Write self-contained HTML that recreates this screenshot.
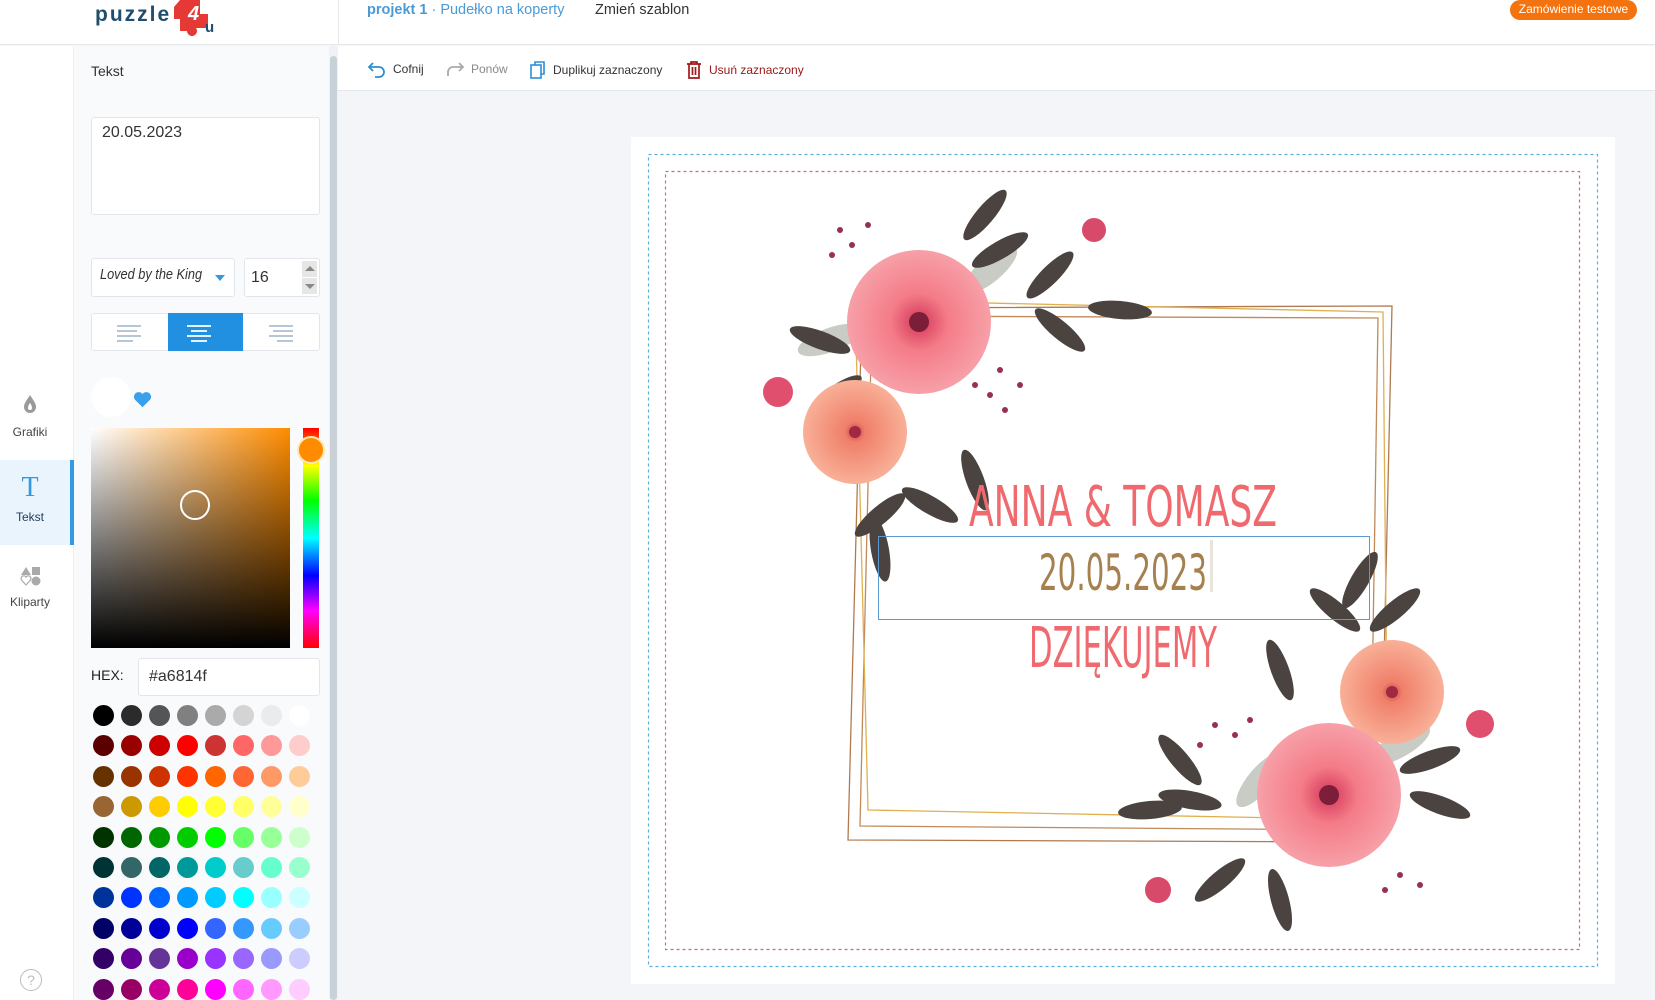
<!DOCTYPE html>
<html><head><meta charset="utf-8">
<style>
*{box-sizing:border-box;margin:0;padding:0}
body{width:1655px;height:1000px;overflow:hidden;background:#f4f5f8;font-family:"Liberation Sans",sans-serif;position:relative;color:#333}
.abs{position:absolute}
#header{left:0;top:0;width:1655px;height:45px;background:#fff;border-bottom:1px solid #e6e8ec}
#rail{left:0;top:46px;width:74px;height:954px;background:#fff;border-right:1px solid #eceef2}
#panel{left:74px;top:46px;width:255px;height:954px;background:#f9fafc}
#scroll{left:329px;top:46px;width:9px;height:954px;background:#f0f2f5}
#thumb{left:330px;top:56px;width:7px;height:944px;background:#c8d0d8;border-radius:4px}
#toolbar{left:338px;top:46px;width:1317px;height:45px;background:#fff;border-bottom:1px solid #e3e6ea}
.tb{top:60px;font-size:12px;color:#333;display:flex;align-items:center;gap:6px}
.box{background:#fff;border:1px solid #e2e5ea;border-radius:3px}
.sw{width:21px;height:21px;border-radius:50%}
#grid{left:93px;top:705px;display:grid;grid-template-columns:repeat(8,21px);column-gap:7px;row-gap:9.4px}
.lab{font-size:12px;color:#444;text-align:center;width:60px}
</style></head><body>
<div id="header" class="abs"></div>
<div class="abs" style="left:338px;top:0;width:1px;height:45px;background:#e6e8ec"></div>
<!-- logo -->
<svg class="abs" style="left:92px;top:0" width="140" height="44" viewBox="0 0 140 44">
<path d="M88 0 h20 v14 h8 v14 h-12 a5 5 0 1 1 -9 3 h-7 v-12 h-6 v-12 z" fill="#e53935"/>
<text x="3" y="21" font-family="Liberation Sans" font-weight="bold" font-size="21" fill="#1f4e6e" letter-spacing="2">puzzle</text>
<text x="96" y="20" font-family="Liberation Sans" font-weight="bold" font-style="italic" font-size="20" fill="#fff">4</text>
<text x="113" y="32" font-family="Liberation Sans" font-weight="bold" font-size="15" fill="#1f4e6e">u</text>
</svg>
<div class="abs" style="left:367px;top:2px;font-size:14.5px;color:#4a9ad6"><b>projekt 1</b> · Pudełko na koperty</div>
<div class="abs" style="left:595px;top:2px;font-size:14.5px;color:#333">Zmień szablon</div>
<div class="abs" style="left:1510px;top:0;width:127px;height:20px;background:#f5730f;border-radius:10px;color:#fff;font-size:12px;text-align:center;line-height:19px">Zamówienie testowe</div>

<div id="toolbar" class="abs"></div>
<div class="abs tb" style="left:367px"><svg width="20" height="18" viewBox="0 0 20 18"><path d="M6 3 L2 7 L6 11 M2 7 H12 a5 5 0 0 1 0 10 H8" fill="none" stroke="#2c8fd6" stroke-width="1.8"/></svg>Cofnij</div>
<div class="abs tb" style="left:445px;color:#888"><svg width="20" height="18" viewBox="0 0 20 18"><path d="M14 3 L18 7 L14 11 M18 7 H8 a5 5 0 0 0 -5 5 V16" fill="none" stroke="#aaa" stroke-width="1.8"/></svg>Ponów</div>
<div class="abs tb" style="left:529px"><svg width="18" height="20" viewBox="0 0 18 20"><rect x="2" y="5" width="10" height="13" fill="none" stroke="#2c8fd6" stroke-width="1.6"/><path d="M6 5 V2 H15 V14 H12" fill="none" stroke="#2c8fd6" stroke-width="1.6"/></svg>Duplikuj zaznaczony</div>
<div class="abs tb" style="left:685px;color:#a01818"><svg width="18" height="20" viewBox="0 0 18 20"><path d="M2 4 H16 M6 4 V2 H12 V4 M4 4 V18 H14 V4 M7.5 7 V15 M10.5 7 V15" fill="none" stroke="#a01818" stroke-width="1.7"/></svg>Usuń zaznaczony</div>

<div id="rail" class="abs"></div>
<svg class="abs" style="left:22px;top:394px" width="16" height="20" viewBox="0 0 16 20"><path d="M8 1 C5 6 2 9 2 13 a6 6 0 0 0 12 0 C14 9 11 6 8 1z" fill="#9a9a9a"/><path d="M8 9 C6.5 11 6 12.5 6 14 a2 2 0 0 0 4 0 c0-1.5 -0.5-3 -2-5z" fill="#fff"/></svg>
<div class="abs lab" style="left:0;top:425px">Grafiki</div>
<div class="abs" style="left:0;top:460px;width:74px;height:85px;background:#e9f4fd;border-right:4px solid #3399e0"></div>
<div class="abs" style="left:0;top:472px;width:60px;text-align:center;font-family:'Liberation Serif',serif;font-size:28px;color:#3399e0">T</div>
<div class="abs lab" style="left:0;top:510px;color:#1f3b57">Tekst</div>
<svg class="abs" style="left:20px;top:565px" width="22" height="22" viewBox="0 0 22 22"><path d="M6 2 L11 10 H1z" fill="#aaa"/><rect x="12" y="2" width="8" height="8" fill="#aaa"/><path d="M6 20 L1.5 15 a2.5 2.5 0 0 1 4.5-3 a2.5 2.5 0 0 1 4.5 3z" fill="none" stroke="#aaa" stroke-width="1.2"/><circle cx="16" cy="16" r="4.5" fill="#aaa"/></svg>
<div class="abs lab" style="left:0;top:595px">Kliparty</div>
<div class="abs" style="left:20px;top:969px;width:22px;height:22px;border:1px solid #bbb;border-radius:50%;color:#bbb;font-size:14px;text-align:center;line-height:20px">?</div>

<div id="panel" class="abs"></div>
<div id="scroll" class="abs"></div>
<div id="thumb" class="abs"></div>
<div class="abs" style="left:91px;top:63px;font-size:14px;color:#333">Tekst</div>
<div class="abs box" style="left:91px;top:117px;width:229px;height:98px;font-size:16px;padding:6px 10px;color:#333">20.05.2023</div>
<div class="abs box" style="left:91px;top:258px;width:144px;height:39px"></div>
<div class="abs" style="left:100px;top:266px;font-family:'Liberation Sans Narrow','Liberation Sans',sans-serif;font-size:15px;color:#333;font-style:italic;transform:scaleX(.85);transform-origin:left">Loved by the King</div>
<div class="abs" style="left:215px;top:275px;width:0;height:0;border-left:5px solid transparent;border-right:5px solid transparent;border-top:6px solid #3399e0"></div>
<div class="abs box" style="left:244px;top:258px;width:76px;height:39px;font-size:16px;padding:10px 6px">16</div>
<div class="abs" style="left:302px;top:261px;width:15px;height:16px;background:#e6e6e6"></div>
<div class="abs" style="left:302px;top:278px;width:15px;height:16px;background:#e6e6e6"></div>
<div class="abs" style="left:305px;top:266px;border-left:5px solid transparent;border-right:5px solid transparent;border-bottom:5px solid #888"></div>
<div class="abs" style="left:305px;top:284px;border-left:5px solid transparent;border-right:5px solid transparent;border-top:5px solid #888"></div>
<div class="abs box" style="left:91px;top:313px;width:229px;height:38px"></div>
<div class="abs" style="left:168px;top:313px;width:75px;height:38px;background:#2290e0"></div>
<svg class="abs" style="left:91px;top:313px" width="229" height="38">
<g stroke="#9fb2c6" stroke-width="1.6"><path d="M26 13 H50 M26 18 H46 M26 23 H50 M26 28 H42"/><path d="M178 13 H202 M182 18 H202 M178 23 H202 M186 28 H202"/></g>
<g stroke="#fff" stroke-width="1.8"><path d="M96 13 H120 M100 18 H116 M96 23 H120 M100 28 H116"/></g>
</svg>
<div class="abs" style="left:91px;top:377px;width:40px;height:40px;border-radius:50%;background:#fff"></div>
<svg class="abs" style="left:133px;top:391px" width="19" height="17" viewBox="0 0 24 22"><path d="M12 21 L2 11 A5.5 5.5 0 0 1 12 4 A5.5 5.5 0 0 1 22 11z" fill="#3ba0ea"/></svg>
<div class="abs" style="left:91px;top:428px;width:199px;height:220px;background:linear-gradient(to top,#000,rgba(0,0,0,0)),linear-gradient(to right,#fff,#ff8c00)"></div>
<div class="abs" style="left:180px;top:490px;width:30px;height:30px;border:2px solid #fff;border-radius:50%"></div>
<div class="abs" style="left:303px;top:428px;width:16px;height:220px;background:linear-gradient(to bottom,#f00,#ff0 17%,#0f0 33%,#0ff 50%,#00f 67%,#f0f 83%,#f00)"></div>
<div class="abs" style="left:297px;top:436px;width:28px;height:28px;border-radius:50%;background:#ff8c00;border:2px solid #ffe7b0"></div>
<div class="abs" style="left:91px;top:667px;font-size:14px;color:#222">HEX:</div>
<div class="abs box" style="left:138px;top:658px;width:182px;height:38px;font-size:16px;padding:9px 10px;color:#333">#a6814f</div>
<div id="grid" class="abs">
<span class="sw" style="background:#000"></span><span class="sw" style="background:#2b2b2b"></span><span class="sw" style="background:#555"></span><span class="sw" style="background:#808080"></span><span class="sw" style="background:#aaa"></span><span class="sw" style="background:#d4d4d4"></span><span class="sw" style="background:#ebebeb"></span><span class="sw" style="background:#fff"></span>
<span class="sw" style="background:#5a0000"></span><span class="sw" style="background:#990000"></span><span class="sw" style="background:#cc0000"></span><span class="sw" style="background:#ff0000"></span><span class="sw" style="background:#cc3333"></span><span class="sw" style="background:#ff6666"></span><span class="sw" style="background:#ff9999"></span><span class="sw" style="background:#ffcccc"></span>
<span class="sw" style="background:#663300"></span><span class="sw" style="background:#993300"></span><span class="sw" style="background:#cc3300"></span><span class="sw" style="background:#ff3300"></span><span class="sw" style="background:#ff6600"></span><span class="sw" style="background:#ff6633"></span><span class="sw" style="background:#ff9966"></span><span class="sw" style="background:#ffcc99"></span>
<span class="sw" style="background:#996633"></span><span class="sw" style="background:#cc9900"></span><span class="sw" style="background:#ffcc00"></span><span class="sw" style="background:#ffff00"></span><span class="sw" style="background:#ffff33"></span><span class="sw" style="background:#ffff66"></span><span class="sw" style="background:#ffff99"></span><span class="sw" style="background:#ffffcc"></span>
<span class="sw" style="background:#003300"></span><span class="sw" style="background:#006600"></span><span class="sw" style="background:#009900"></span><span class="sw" style="background:#00cc00"></span><span class="sw" style="background:#00ff00"></span><span class="sw" style="background:#66ff66"></span><span class="sw" style="background:#99ff99"></span><span class="sw" style="background:#ccffcc"></span>
<span class="sw" style="background:#003333"></span><span class="sw" style="background:#336666"></span><span class="sw" style="background:#006666"></span><span class="sw" style="background:#009999"></span><span class="sw" style="background:#00cccc"></span><span class="sw" style="background:#66cccc"></span><span class="sw" style="background:#66ffcc"></span><span class="sw" style="background:#99ffcc"></span>
<span class="sw" style="background:#003399"></span><span class="sw" style="background:#0033ff"></span><span class="sw" style="background:#0066ff"></span><span class="sw" style="background:#0099ff"></span><span class="sw" style="background:#00ccff"></span><span class="sw" style="background:#00ffff"></span><span class="sw" style="background:#99ffff"></span><span class="sw" style="background:#ccffff"></span>
<span class="sw" style="background:#000066"></span><span class="sw" style="background:#000099"></span><span class="sw" style="background:#0000cc"></span><span class="sw" style="background:#0000ff"></span><span class="sw" style="background:#3366ff"></span><span class="sw" style="background:#3399ff"></span><span class="sw" style="background:#66ccff"></span><span class="sw" style="background:#99ccff"></span>
<span class="sw" style="background:#330066"></span><span class="sw" style="background:#660099"></span><span class="sw" style="background:#663399"></span><span class="sw" style="background:#9900cc"></span><span class="sw" style="background:#9933ff"></span><span class="sw" style="background:#9966ff"></span><span class="sw" style="background:#9999ff"></span><span class="sw" style="background:#ccccff"></span>
<span class="sw" style="background:#660066"></span><span class="sw" style="background:#990066"></span><span class="sw" style="background:#cc0099"></span><span class="sw" style="background:#ff0099"></span><span class="sw" style="background:#ff00ff"></span><span class="sw" style="background:#ff66ff"></span><span class="sw" style="background:#ff99ff"></span><span class="sw" style="background:#ffccff"></span>
</div>

<!-- canvas -->
<svg class="abs" style="left:631px;top:137px" width="984" height="847" viewBox="631 137 984 847">
<defs>
<radialGradient id="pk"><stop offset="0" stop-color="#b0284a"/><stop offset=".15" stop-color="#e0506a"/><stop offset=".4" stop-color="#f47c88"/><stop offset="1" stop-color="#f7a0a8"/></radialGradient>
<radialGradient id="pe"><stop offset="0" stop-color="#c84050"/><stop offset=".2" stop-color="#f0806a"/><stop offset="1" stop-color="#f9b098"/></radialGradient>
<ellipse id="lf" cx="0" cy="0" rx="32" ry="9" fill="#4a4340"/>
<ellipse id="lg" cx="0" cy="0" rx="34" ry="12" fill="#c8ccc4"/>
</defs>
<rect x="631" y="137" width="984" height="847" fill="#fff"/>
<rect x="648.5" y="154.5" width="949" height="812" fill="none" stroke="#5aaee0" stroke-width="1.2" stroke-dasharray="3,3"/>
<rect x="665.5" y="171.5" width="914" height="778" fill="none" stroke="#c860b8" stroke-width="1.2" stroke-dasharray="3,3"/>
<g fill="none" stroke-width="1.3">
<path d="M862 308 L1392 306 L1380 842 L848 840 Z" stroke="#b07a50"/>
<path d="M872 316 L1378 318 L1370 830 L860 826 Z" stroke="#c08a5a"/>
<path d="M855 300 L1383 312 L1388 820 L868 810 Z" stroke="#e0b050"/>
</g>
<g>
<use href="#lg" transform="translate(830 340) rotate(-20)"/>
<use href="#lg" transform="translate(870 420) rotate(60)"/>
<use href="#lg" transform="translate(990 270) rotate(-40)"/>
<use href="#lf" transform="translate(820 340) rotate(20)"/>
<use href="#lf" transform="translate(835 395) rotate(-35)"/>
<use href="#lf" transform="translate(1000 250) rotate(-30)"/>
<use href="#lf" transform="translate(1050 275) rotate(-45)"/>
<use href="#lf" transform="translate(1120 310) rotate(5)"/>
<use href="#lf" transform="translate(1060 330) rotate(40)"/>
<use href="#lf" transform="translate(985 215) rotate(-50)"/>
<use href="#lf" transform="translate(975 480) rotate(70)"/>
<use href="#lf" transform="translate(880 515) rotate(-40)"/>
<use href="#lf" transform="translate(880 550) rotate(80)"/>
<use href="#lf" transform="translate(930 505) rotate(30)"/>
<circle cx="919" cy="322" r="72" fill="url(#pk)"/>
<circle cx="919" cy="322" r="10" fill="#7a1e3a"/>
<circle cx="855" cy="432" r="52" fill="url(#pe)"/>
<circle cx="855" cy="432" r="6" fill="#a02840"/>
<circle cx="778" cy="392" r="15" fill="#e0506e"/>
<circle cx="1094" cy="230" r="12" fill="#d84a6a"/>
<g fill="#9a3050"><circle cx="840" cy="230" r="3"/><circle cx="852" cy="245" r="3"/><circle cx="868" cy="225" r="3"/><circle cx="832" cy="255" r="3"/><circle cx="1000" cy="370" r="3"/><circle cx="1020" cy="385" r="3"/><circle cx="990" cy="395" r="3"/><circle cx="1005" cy="410" r="3"/><circle cx="975" cy="385" r="3"/></g>
</g>
<g>
<use href="#lg" transform="translate(1400 745) rotate(-30)"/>
<use href="#lg" transform="translate(1260 780) rotate(-50)"/>
<use href="#lf" transform="translate(1360 580) rotate(-60)"/>
<use href="#lf" transform="translate(1335 610) rotate(40)"/>
<use href="#lf" transform="translate(1395 610) rotate(-40)"/>
<use href="#lf" transform="translate(1430 760) rotate(-20)"/>
<use href="#lf" transform="translate(1440 805) rotate(20)"/>
<use href="#lf" transform="translate(1190 800) rotate(10)"/>
<use href="#lf" transform="translate(1150 810) rotate(-5)"/>
<use href="#lf" transform="translate(1180 760) rotate(50)"/>
<use href="#lf" transform="translate(1280 670) rotate(70)"/>
<use href="#lf" transform="translate(1220 880) rotate(-40)"/>
<use href="#lf" transform="translate(1280 900) rotate(75)"/>
<circle cx="1392" cy="692" r="52" fill="url(#pe)"/>
<circle cx="1392" cy="692" r="6" fill="#a02840"/>
<circle cx="1329" cy="795" r="72" fill="url(#pk)"/>
<circle cx="1329" cy="795" r="10" fill="#7a1e3a"/>
<circle cx="1480" cy="724" r="14" fill="#e0506e"/>
<circle cx="1158" cy="890" r="13" fill="#d84a6a"/>
<g fill="#9a3050"><circle cx="1215" cy="725" r="3"/><circle cx="1235" cy="735" r="3"/><circle cx="1200" cy="745" r="3"/><circle cx="1250" cy="720" r="3"/><circle cx="1400" cy="875" r="3"/><circle cx="1420" cy="885" r="3"/><circle cx="1385" cy="890" r="3"/></g>
</g>
<rect x="878.5" y="536.5" width="491" height="83" fill="none" stroke="#5a9ad0" stroke-width="1"/>
<g font-family="'DejaVu Sans Condensed','Liberation Sans',sans-serif" font-weight="200" text-anchor="middle">
<text x="1123" y="526" font-size="56" fill="#ef6a6e" textLength="308" lengthAdjust="spacingAndGlyphs">ANNA &amp; TOMASZ</text>
<text x="1123" y="590" font-size="50" fill="#a6814f" textLength="168" lengthAdjust="spacingAndGlyphs">20.05.2023</text>
<text x="1123" y="667" font-size="56" fill="#ef6a6e" textLength="188" lengthAdjust="spacingAndGlyphs">DZIĘKUJEMY</text>
</g>
<rect x="1210" y="540" width="3" height="52" fill="#e8e4dc"/>
</svg>
</body></html>
